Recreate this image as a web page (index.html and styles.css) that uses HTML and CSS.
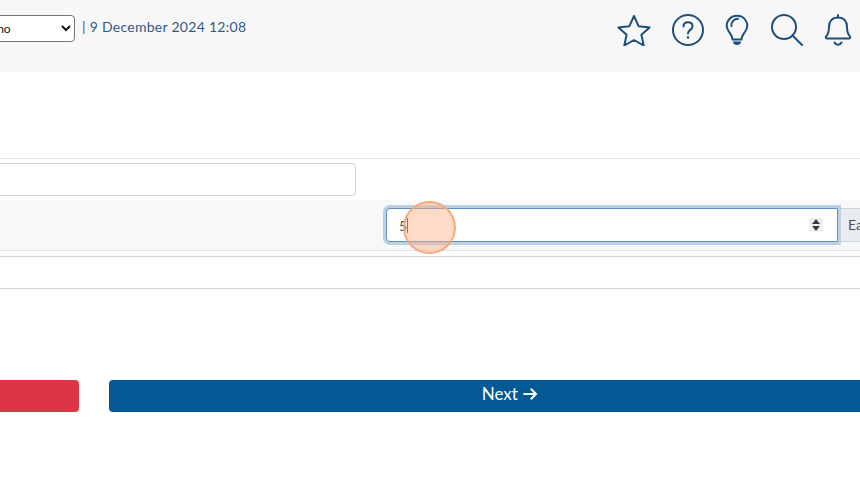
FILE: index.html
```html
<!DOCTYPE html>
<html lang="en">
<head>
    <meta charset="UTF-8">
    <meta name="viewport" content="width=device-width, initial-scale=1.0">
    <title>Stock entry</title>
    <link rel="stylesheet" href="styles.css">
</head>

<body>

    <header class="topbar">
        <div class="topbar-info">
            <select class="lang-select">
                <option>Italiano</option>
            </select>
            <span class="topbar-date">| 9 December 2024 12:08</span>
        </div>
        <nav class="topbar-icons">
            <a href="#" class="icon-link">
                <svg width="34" height="32" viewBox="0 0 34 32"><path d="M17 2l4.600 10.200 11 1.200-8.200 7.300 2.300 10.800-9.700-5.500-9.700 5.500 2.300-10.800L1.400 13.400l11-1.200z"/></svg>
            </a>
            <a href="#" class="icon-link">
                <svg width="34" height="32" viewBox="0 0 34 32"><circle cx="17" cy="16" r="15"/><path d="M12.500 12.500c0-2.800 2-4.300 4.500-4.300s4.500 1.500 4.500 4c0 3.800-4.500 3.500-4.500 7.300"/><circle class="icon-dot" cx="17" cy="23.500" r="1.300"/></svg>
            </a>
            <a href="#" class="icon-link">
                <svg width="24" height="32" viewBox="0 0 24 32"><path d="M7.500 25.500c0-3.500-2-5.500-4-8.500C1 13 1.500 8.500 4 5.500 6 3 9 1.800 12 1.800s6 1.200 8 3.700c2.500 3 3 7.500.5 11.500-2 3-4 5-4 8.500z"/><path d="M6.500 12c-.5-4 2.500-7.300 6.500-7.300"/><path class="icon-fill" d="M8 27.500h8c0 2-1.500 3.500-4 3.500s-4-1.500-4-3.500z"/></svg>
            </a>
            <a href="#" class="icon-link">
                <svg width="34" height="32" viewBox="0 0 34 32"><circle cx="15" cy="13" r="12"/><path d="M23.500 21.500L33 31"/></svg>
            </a>
            <a href="#" class="icon-link">
                <svg width="30" height="32" viewBox="0 0 30 32"><path d="M15 1v2.500M3 22.500c2.500-2.500 3-5 3-9.500 0-6 3.500-9.500 9-9.500s9 3.500 9 9.500c0 4.500.5 7 3 9.500.8 1-.2 2-1 2H4c-.8 0-1.800-1-1-2z"/><path d="M11.500 28.500c.8 1.500 2 2.300 3.500 2.300s2.700-.8 3.500-2.300"/></svg>
            </a>
        </nav>
    </header>

    <main class="content">
        <section class="form-section">
            <div class="name-row">
                <input type="text" class="text-field">
            </div>
            <div class="qty-row">
                <div class="qty-group">
                    <input type="number" class="qty-input" value="5">
                    <span class="qty-unit">Each</span>
                </div>
                <span class="spin"></span>
                <span class="caret"></span>
                <span class="click-mark"></span>
            </div>
            <div class="empty-row"></div>
        </section>

        <div class="form-actions">
            <button type="button" class="btn btn-cancel" aria-label="Cancel"></button>
            <button type="button" class="btn btn-next">Next
                <svg class="next-arrow" width="16" height="16" viewBox="0 0 16 16"><path d="M1.500 8h12.500M8.800 2.800L14 8l-5.200 5.200"/></svg>
            </button>
        </div>
    </main>

</body>
</html>
```

FILE: styles.css
```css
html,
body {
    margin: 0;
    padding: 0;
    width: 860px;
    height: 480px;
    overflow: hidden;
    background-color: #fff;
    font-family: 'Lato', 'Open Sans', sans-serif;
}

.topbar {
    background-color: #f7f7f8;
    height: 72px;
    display: flex;
    justify-content: space-between;
    align-items: flex-start;
}

.topbar-info {
    display: flex;
    align-items: center;
    gap: 6px;
    padding-top: 15px;
}

.lang-select {
    width: 125px;
    height: 27px;
    margin-left: -50px;
    padding-left: 17px;
    font-family: 'Lato', sans-serif;
    font-size: 12px;
    color: #111;
    background-color: #fff;
    border: 1px solid #767676;
    border-radius: 4px;
}

.topbar-date {
    font-size: 14px;
    letter-spacing: 0.28px;
    color: #34597f;
    margin-top: -4px;
    margin-left: 1px;
}

.topbar-icons {
    display: flex;
    align-items: center;
    gap: 20px;
    padding-top: 14px;
    margin-right: 7px;
}

.icon-link {
    display: block;
    height: 32px;
}

.icon-link svg {
    display: block;
    fill: none;
    stroke: #1f4e79;
    stroke-width: 2;
    stroke-linejoin: round;
    stroke-linecap: round;
}

.icon-link svg .icon-dot,
.icon-link svg .icon-fill {
    fill: #1f4e79;
    stroke: none;
}

.content {
    padding-top: 86px;
}

.form-section {
    border-top: 1px solid #e6e6e6;
    position: relative;
}

.name-row {
    height: 41px;
    padding-top: 4px;
    box-sizing: border-box;
}

.text-field {
    display: block;
    box-sizing: border-box;
    width: 376px;
    height: 33px;
    margin-left: -20px;
    border: 1px solid #ced4da;
    border-radius: 4px;
    background-color: #fff;
}

.qty-row {
    height: 51px;
    box-sizing: border-box;
    background-color: #f7f8f9;
    border-bottom: 1px solid #dee2e6;
    padding-top: 8px;
    padding-left: 386px;
    position: relative;
}

.qty-group {
    display: flex;
    width: 560px;
    height: 34px;
}

.qty-input {
    box-sizing: border-box;
    width: 452px;
    height: 34px;
    padding: 0 12px;
    font-family: 'Lato', sans-serif;
    font-size: 14px;
    color: #495057;
    background-color: #fff;
    border: 1px solid #5f8fc0;
    border-radius: 4px 0 0 4px;
    box-shadow: 0 0 0 3px #bdcfe3;
    outline: none;
    position: relative;
    z-index: 1;
    -moz-appearance: textfield;
}

.qty-input::-webkit-inner-spin-button {
    display: none;
}

.qty-unit {
    box-sizing: border-box;
    height: 34px;
    padding: 0 10px;
    line-height: 32px;
    font-size: 14px;
    color: #495057;
    background-color: #e9ecef;
    border: 1px solid #ced4da;
    border-left: none;
}

/* number arrows, always shown in the reference */
.spin {
    position: absolute;
    left: 809px;
    top: 18px;
    width: 14px;
    height: 14px;
    background-color: #f0f0f0;
    z-index: 2;
}

.spin::before,
.spin::after {
    content: "";
    position: absolute;
    left: 3px;
    border-left: 4px solid transparent;
    border-right: 4px solid transparent;
}

.spin::before {
    top: 1px;
    border-bottom: 5px solid #3a3a3a;
}

.spin::after {
    bottom: 1px;
    border-top: 5px solid #3a3a3a;
}

.caret {
    position: absolute;
    left: 407px;
    top: 18px;
    width: 1px;
    height: 15px;
    background-color: #444;
    z-index: 2;
}

.click-mark {
    position: absolute;
    left: 403px;
    top: 1px;
    width: 53px;
    height: 53px;
    box-sizing: border-box;
    border: 2px solid rgba(243, 166, 117, 0.9);
    border-radius: 50%;
    background-color: rgba(255, 172, 128, 0.45);
    z-index: 3;
}

.empty-row {
    height: 31px;
    margin-top: 5px;
    border-top: 1px solid #d4d4d4;
    border-bottom: 1px solid #d4d4d4;
    box-sizing: content-box;
}

.form-actions {
    display: flex;
    gap: 30px;
    margin-top: 91px;
    margin-left: -300px;
}

.btn {
    height: 32px;
    border: none;
    border-radius: 4px;
    color: #fff;
    font-family: 'Lato', sans-serif;
    font-size: 17px;
    padding: 0;
    flex-shrink: 0;
}

.btn-cancel {
    width: 379px;
    background-color: #dc3545;
}

.btn-next {
    width: 802px;
    padding-bottom: 5px;
    background-color: #045a94;
}

.next-arrow {
    vertical-align: -2px;
    fill: none;
    stroke: #fff;
    stroke-width: 2;
}
```
